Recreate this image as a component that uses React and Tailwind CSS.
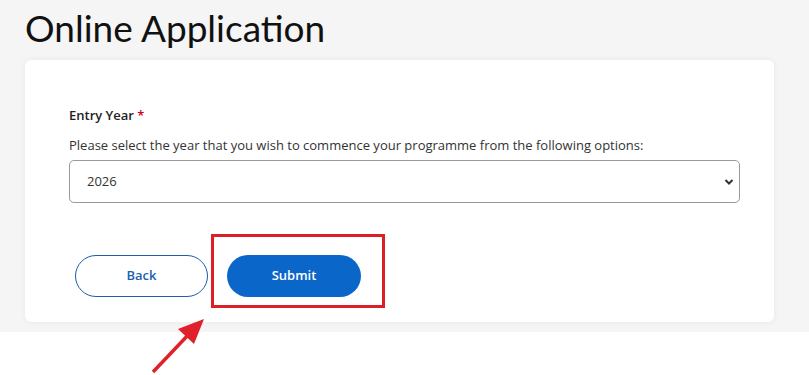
export default function App() {
  return (
    <div className="relative w-[809px] h-[375px] bg-white overflow-hidden" style={{ fontFamily: '"Open Sans", "Noto Sans", sans-serif' }}>
      <div className="h-[332px] bg-[#f5f5f5] pl-[25px] pr-[35px] pt-[5px]">
        <h1 className="text-[37px] leading-[45px] text-[#111] h-[55px]" style={{ fontFamily: 'Lato, "Noto Sans", sans-serif' }}>Online Application</h1>
        <div className="bg-white rounded-[6px] shadow-[0_0_6px_rgba(0,0,0,0.06)] h-[262px] pl-[44px] pr-[34px] pt-[45px]">
          <div className="text-[13px] leading-[20px] font-semibold text-[#222]">
            Entry Year <span className="text-[#d0021b]">*</span>
          </div>
          <div className="mt-[10px] text-[13px] leading-[20px] text-[#333]">
            Please select the year that you wish to commence your programme from the following options:
          </div>
          <div className="relative mt-[5px] h-[43px] border border-[#999] rounded-[5px] flex items-center pl-[17px] text-[13px] text-[#333]">
            2026
            <svg className="absolute right-[5px] top-[17px]" width="10" height="8" viewBox="0 0 10 8">
              <path d="M1.5 2 L5 5.5 L8.5 2" fill="none" stroke="#333" strokeWidth="2" />
            </svg>
          </div>
          <div className="mt-[52px] ml-[6px] flex gap-[19px]">
            <button className="w-[133px] h-[42px] rounded-full border border-[#1c5ea8] text-[#1a62b0] text-[13px] font-semibold bg-white">Back</button>
            <div className="relative">
              <button className="w-[134px] h-[42px] rounded-full bg-[#0a66c8] text-white text-[13px] font-semibold">Submit</button>
              <div className="absolute left-[-16px] top-[-21px] w-[174px] h-[74px] border-[3px] border-[#dc1f26]"></div>
            </div>
          </div>
        </div>
      </div>
      <svg className="absolute left-0 top-0" width="809" height="375" viewBox="0 0 809 375">
        <line x1="153" y1="372" x2="190" y2="333" stroke="#e0202a" strokeWidth="3.5" />
        <polygon points="204,319 178,329 194,344" fill="#e0202a" />
      </svg>
    </div>
  );
}
